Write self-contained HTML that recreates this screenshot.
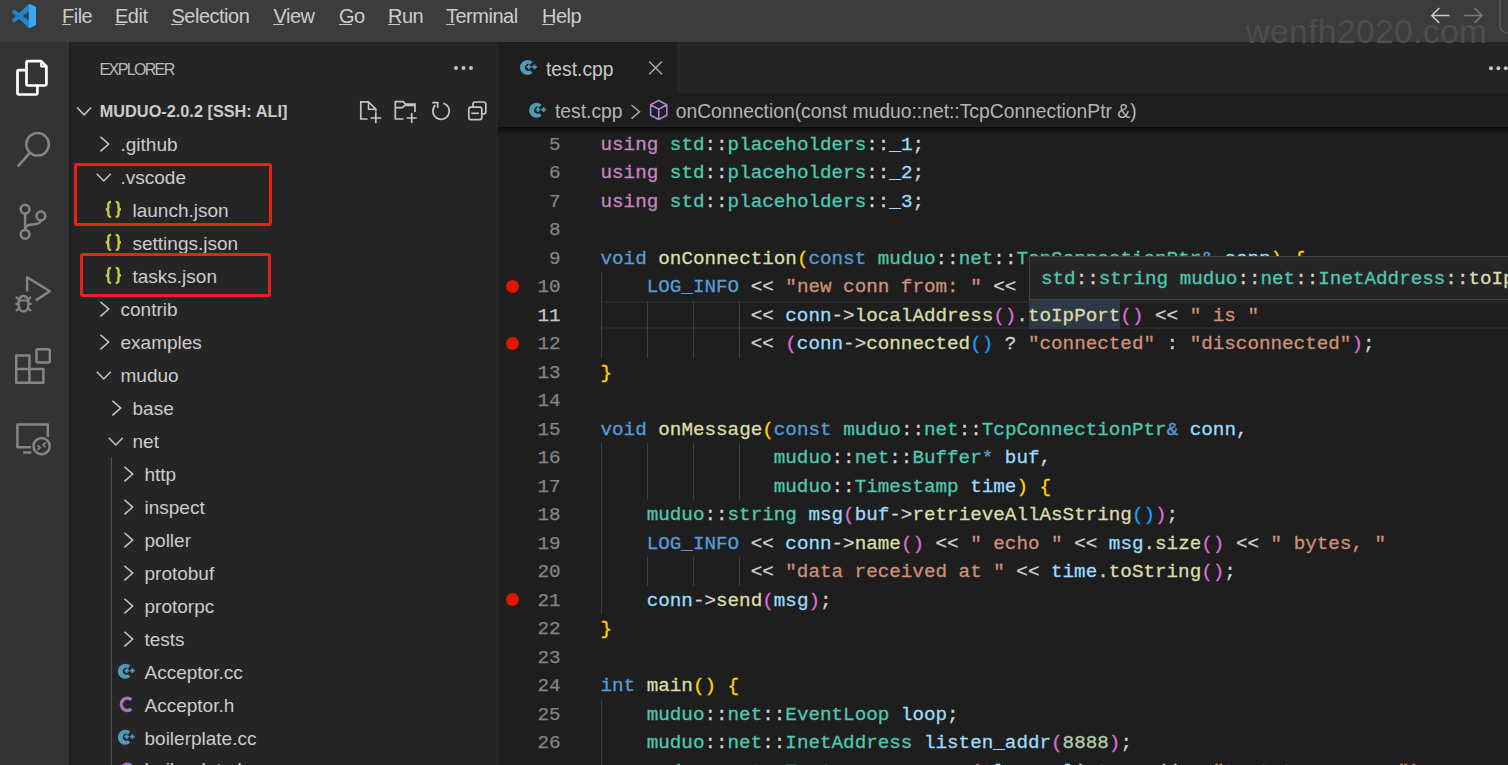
<!DOCTYPE html><html><head><meta charset="utf-8"><style>
*{margin:0;padding:0;box-sizing:border-box}
html,body{width:1508px;height:765px;overflow:hidden;background:#1e1e1e}
body{position:relative;font-family:"Liberation Sans",sans-serif}
.a{position:absolute}
.t{position:absolute;white-space:pre;line-height:1}
#title{left:0;top:0;width:1508px;height:42px;background:#3c3c3c}
#act{left:0;top:42px;width:69px;height:723px;background:#333333}
#side{left:69px;top:42px;width:429px;height:723px;background:#252526}
#tabs{left:498px;top:42px;width:1010px;height:51px;background:#252526}
#tab{left:498px;top:42px;width:179px;height:51px;background:#1e1e1e}
#crumbs{left:498px;top:93px;width:1010px;height:34px;background:#1e1e1e}
.menu{font-size:19.5px;color:#cccccc}
.menu u{text-decoration:none;border-bottom:1px solid #cccccc}
.tree{font-size:19px;color:#cccccc}
.code{font-family:"Liberation Mono",monospace;font-size:19.25px;-webkit-text-stroke:0.3px currentColor;white-space:pre;position:absolute;line-height:28.5px;height:28.5px}
.ln{font-family:"Liberation Mono",monospace;font-size:19.25px;-webkit-text-stroke:0.25px currentColor;position:absolute;line-height:28.5px;color:#858585;text-align:right;width:60px;left:500.5px}
.code span{-webkit-text-stroke:0.3px currentColor}
.k{color:#c586c0}.ty{color:#4ec9b0}.p{color:#d4d4d4}.v{color:#9cdcfe}.b{color:#569cd6}.f{color:#dcdcaa}.s{color:#ce9178}.n{color:#b5cea8}
.y{color:#ffd700}.o{color:#da70d6}.c{color:#179fff}
.guide{position:absolute;width:1px;background:#404040}
.bp{position:absolute;width:13px;height:13px;border-radius:50%;background:#e51400}
</style></head><body><div class="a" id="title"></div><div class="a" id="act"></div><div class="a" id="side"></div>
<div class="a" style="left:69px;top:42px;width:1.5px;height:723px;background:#202021"></div>
<div class="a" id="tabs"></div><div class="a" id="tab"></div><div class="a" id="crumbs"></div>
<svg class="a" style="left:12px;top:4px" width="24" height="24" viewBox="0 0 24 24"><defs><clipPath id="lc"><rect x="16.6" y="0" width="8" height="24"/></clipPath></defs><path fill="#1f86d6" d="M23.15 2.587L18.21.21a1.494 1.494 0 0 0-1.705.29l-9.46 8.63-4.12-3.128a.999.999 0 0 0-1.276.057L.327 7.261A1 1 0 0 0 .326 8.74L3.899 12 .326 15.26a1 1 0 0 0 .001 1.479L1.65 17.94a.999.999 0 0 0 1.276.057l4.12-3.128 9.46 8.63a1.492 1.492 0 0 0 1.704.29l4.942-2.377A1.5 1.5 0 0 0 24 20.06V3.939a1.5 1.5 0 0 0-.85-1.352zm-5.146 14.861L10.826 12l7.178-5.448v10.896z"/><path clip-path="url(#lc)" fill="#3aa7f3" d="M23.15 2.587L18.21.21a1.494 1.494 0 0 0-1.705.29L16.6 24L18.21 23.79l4.942-2.377A1.5 1.5 0 0 0 24 20.06V3.939a1.5 1.5 0 0 0-.85-1.352z"/></svg>
<div class="t" style="left:62.00px;top:6.47px;font-size:20px;color:#cccccc;letter-spacing:-0.5px">File</div>
<div class="a" style="left:61.5px;top:24px;width:9.7px;height:1.2px;background:#c8c8c8"></div>
<div class="t" style="left:115.00px;top:6.47px;font-size:20px;color:#cccccc;letter-spacing:-0.5px">Edit</div>
<div class="a" style="left:114.5px;top:24px;width:10.8px;height:1.2px;background:#c8c8c8"></div>
<div class="t" style="left:171.50px;top:6.47px;font-size:20px;color:#cccccc;letter-spacing:-0.5px">Selection</div>
<div class="a" style="left:171.0px;top:24px;width:10.8px;height:1.2px;background:#c8c8c8"></div>
<div class="t" style="left:273.50px;top:6.47px;font-size:20px;color:#cccccc;letter-spacing:-0.5px">View</div>
<div class="a" style="left:273.0px;top:24px;width:10.8px;height:1.2px;background:#c8c8c8"></div>
<div class="t" style="left:339.00px;top:6.47px;font-size:20px;color:#cccccc;letter-spacing:-0.5px">Go</div>
<div class="a" style="left:338.5px;top:24px;width:13.1px;height:1.2px;background:#c8c8c8"></div>
<div class="t" style="left:388.00px;top:6.47px;font-size:20px;color:#cccccc;letter-spacing:-0.5px">Run</div>
<div class="a" style="left:387.5px;top:24px;width:12.0px;height:1.2px;background:#c8c8c8"></div>
<div class="t" style="left:446.00px;top:6.47px;font-size:20px;color:#cccccc;letter-spacing:-0.5px">Terminal</div>
<div class="a" style="left:445.5px;top:24px;width:9.7px;height:1.2px;background:#c8c8c8"></div>
<div class="t" style="left:542.00px;top:6.47px;font-size:20px;color:#cccccc;letter-spacing:-0.5px">Help</div>
<div class="a" style="left:541.5px;top:24px;width:12.0px;height:1.2px;background:#c8c8c8"></div>
<div class="t" style="left:1245.50px;top:15.24px;font-size:33.5px;color:#4d4d4d;letter-spacing:0.4px">wenfh2020.com</div>
<svg class="a" style="left:1420px;top:0" width="88" height="42"><g fill="none" stroke-width="1.6">
<path stroke="#cccccc" d="M11.8 15.5H29.4M19.3 8L11.8 15.5L19.3 23"/>
<path stroke="#7a7a7a" d="M44 15.5H62M54.5 8L62 15.5L54.5 23"/></g>
<rect x="80" y="-8" width="40" height="41" rx="7" fill="none" stroke="#5e5e5e" stroke-width="1.2"/></svg>
<svg class="a" style="left:0;top:0" width="69" height="470"><g fill="none" stroke-linejoin="round">
<g stroke="#ffffff" stroke-width="2.7">
<path d="M26.5 70.2H18.9a1.4 1.4 0 0 0-1.4 1.4V93.1a1.4 1.4 0 0 0 1.4 1.4H36a1.4 1.4 0 0 0 1.4-1.4V85.5"/>
<path d="M27.9 61.2H41.2L46.4 66.4V84.1a1.4 1.4 0 0 1-1.4 1.4H27.9a1.4 1.4 0 0 1-1.4-1.4V62.6a1.4 1.4 0 0 1 1.4-1.4Z"/>
<path d="M41.2 61.2V66.4H46.4" stroke-width="2"/>
</g>
<g stroke="#858585" stroke-width="2.5">
<circle cx="37.6" cy="144.3" r="11.3"/><path d="M29.6 153.2L17.8 166.5"/>
<circle cx="25.1" cy="209.2" r="4.4"/><circle cx="40.9" cy="215.9" r="4.4"/><circle cx="25.1" cy="234.3" r="4.4"/>
<path d="M25.1 213.6V229.9M25.1 229C26 225 29 224.6 33 224.4C37.5 224.2 40.9 223 40.9 220.3"/>
<path d="M27.1 291.5V277.2L49.8 291.2L35.8 300.4"/>
<path d="M18.6 303.5C18.6 298 20.7 296 23.5 296C26.3 296 28.4 298 28.4 303.5C28.4 309 26.3 311.5 23.5 311.5C20.7 311.5 18.6 309 18.6 303.5Z" stroke-width="2.3"/>
<path d="M18.8 300.5H28.2M16 297L19 299.5M31 297L28 299.5M15.5 303.8H18.6M28.4 303.8H31.5M16 311L19 308M31 311L28 308" stroke-width="2.2"/>
<path d="M16.2 355.5H29.4V369.1H43.4V382.7H16.2ZM16.2 369.1H29.4V382.7"/>
<rect x="36.5" y="349.3" width="13.3" height="13.1" rx="1.5"/>
<path d="M32 447.2H17.4V424.5H47.8V437"/><path d="M23.1 452.5H31.4"/>
</g>
<circle cx="41.6" cy="446.2" r="10.6" fill="#333333"/>
<circle cx="41.6" cy="446.2" r="8.1" stroke="#858585" stroke-width="2.5"/>
<path d="M37.6 445.3L40.2 447.6L37.6 449.9M45.6 442.6L43 444.9L45.6 447.2" stroke="#858585" stroke-width="1.8"/>
</g></svg>
<div class="t" style="left:99.60px;top:62.36px;font-size:16px;color:#bbbbbb;letter-spacing:-1.65px">EXPLORER</div>
<svg class="a" style="left:440px;top:55px" width="40" height="25"><g fill="#c5c5c5"><circle cx="16" cy="13" r="2"/><circle cx="23.5" cy="13" r="2"/><circle cx="31" cy="13" r="2"/></g></svg>
<svg class="a" style="left:0;top:0" width="120" height="130"><path d="M77.1 107.6L84.1 114.8L91.1 107.6" stroke="#c5c5c5" stroke-width="1.5" fill="none"/></svg>
<div class="t" style="left:99.80px;top:103.00px;font-size:16.3px;color:#cccccc;font-weight:bold">MUDUO-2.0.2 [SSH: ALI]</div>
<svg class="a" style="left:350px;top:95px" width="148" height="32"><g fill="none" stroke="#c5c5c5" stroke-width="1.7">
<path d="M17.5 24H10.8V6.9H18.5L25.8 14.2V16.5"/><path d="M18.5 6.9V14.2H25.8" stroke-width="1.5"/><path d="M20.4 23H31.2M25.8 17.2V28.2"/>
<path d="M53.5 24H45.3V6.6H53.2L55.5 9.2H65V17"/><path d="M45.3 12.6H52.5L54.7 10.4H65" stroke-width="1.6"/><path d="M56.7 23H66.7M61.7 18V28"/>
<path d="M93.3 8.2A8.2 8.2 0 1 1 85.4 10.2"/><path d="M82.3 7.6H87.7V12.8"/>
<rect x="118.8" y="12.2" width="13" height="12.4" rx="2.2"/><path d="M123 12.2V9.2A2.2 2.2 0 0 1 125.2 7H133.6A2.2 2.2 0 0 1 135.8 9.2V16.8A2.2 2.2 0 0 1 133.6 19H131.8"/><path d="M121.3 18.3H128.9"/>
</g></svg>
<div class="t" style="left:120.50px;top:134.62px;font-size:19px;color:#cccccc;">.github</div>
<div class="t" style="left:120.50px;top:167.62px;font-size:19px;color:#cccccc;">.vscode</div>
<div class="t" style="left:132.50px;top:200.62px;font-size:19px;color:#cccccc;">launch.json</div>
<div class="t" style="left:132.50px;top:233.62px;font-size:19px;color:#cccccc;">settings.json</div>
<div class="t" style="left:132.50px;top:266.62px;font-size:19px;color:#cccccc;">tasks.json</div>
<div class="t" style="left:120.50px;top:299.62px;font-size:19px;color:#cccccc;">contrib</div>
<div class="t" style="left:120.50px;top:332.62px;font-size:19px;color:#cccccc;">examples</div>
<div class="t" style="left:120.50px;top:365.62px;font-size:19px;color:#cccccc;">muduo</div>
<div class="t" style="left:132.50px;top:398.62px;font-size:19px;color:#cccccc;">base</div>
<div class="t" style="left:132.50px;top:431.62px;font-size:19px;color:#cccccc;">net</div>
<div class="t" style="left:144.50px;top:464.62px;font-size:19px;color:#cccccc;">http</div>
<div class="t" style="left:144.50px;top:497.62px;font-size:19px;color:#cccccc;">inspect</div>
<div class="t" style="left:144.50px;top:530.62px;font-size:19px;color:#cccccc;">poller</div>
<div class="t" style="left:144.50px;top:563.62px;font-size:19px;color:#cccccc;">protobuf</div>
<div class="t" style="left:144.50px;top:596.62px;font-size:19px;color:#cccccc;">protorpc</div>
<div class="t" style="left:144.50px;top:629.62px;font-size:19px;color:#cccccc;">tests</div>
<div class="t" style="left:144.50px;top:662.62px;font-size:19px;color:#cccccc;">Acceptor.cc</div>
<div class="t" style="left:144.50px;top:695.62px;font-size:19px;color:#cccccc;">Acceptor.h</div>
<div class="t" style="left:144.50px;top:728.62px;font-size:19px;color:#cccccc;">boilerplate.cc</div>
<div class="t" style="left:144.50px;top:760.12px;font-size:19px;color:#cccccc;">boilerplate.h</div>
<svg class="a" style="left:0;top:0" width="498" height="765"><path d="M100.4 136.8L108.7 144.1L100.4 151.4" stroke="#c5c5c5" stroke-width="1.5" fill="none"/><path d="M96.8 173.7L103.8 180.9L110.8 173.7" stroke="#c5c5c5" stroke-width="1.5" fill="none"/><g transform="translate(105.2,200.9)" stroke="#cbcb41" stroke-width="2.4" fill="none"><path d="M5.9 1C3.1 1 3.1 2.3 3.1 4.2V6.4C3.1 7.6 2.2 8.5 0.6 8.5C2.2 8.5 3.1 9.4 3.1 10.6V12.8C3.1 14.7 3.1 16 5.9 16"/><path d="M10.5 1C13.3 1 13.3 2.3 13.3 4.2V6.4C13.3 7.6 14.2 8.5 15.8 8.5C14.2 8.5 13.3 9.4 13.3 10.6V12.8C13.3 14.7 13.3 16 10.5 16"/></g><g transform="translate(105.2,233.9)" stroke="#cbcb41" stroke-width="2.4" fill="none"><path d="M5.9 1C3.1 1 3.1 2.3 3.1 4.2V6.4C3.1 7.6 2.2 8.5 0.6 8.5C2.2 8.5 3.1 9.4 3.1 10.6V12.8C3.1 14.7 3.1 16 5.9 16"/><path d="M10.5 1C13.3 1 13.3 2.3 13.3 4.2V6.4C13.3 7.6 14.2 8.5 15.8 8.5C14.2 8.5 13.3 9.4 13.3 10.6V12.8C13.3 14.7 13.3 16 10.5 16"/></g><g transform="translate(105.2,266.9)" stroke="#cbcb41" stroke-width="2.4" fill="none"><path d="M5.9 1C3.1 1 3.1 2.3 3.1 4.2V6.4C3.1 7.6 2.2 8.5 0.6 8.5C2.2 8.5 3.1 9.4 3.1 10.6V12.8C3.1 14.7 3.1 16 5.9 16"/><path d="M10.5 1C13.3 1 13.3 2.3 13.3 4.2V6.4C13.3 7.6 14.2 8.5 15.8 8.5C14.2 8.5 13.3 9.4 13.3 10.6V12.8C13.3 14.7 13.3 16 10.5 16"/></g><path d="M100.4 301.8L108.7 309.1L100.4 316.4" stroke="#c5c5c5" stroke-width="1.5" fill="none"/><path d="M100.4 334.8L108.7 342.1L100.4 349.4" stroke="#c5c5c5" stroke-width="1.5" fill="none"/><path d="M96.8 371.7L103.8 378.9L110.8 371.7" stroke="#c5c5c5" stroke-width="1.5" fill="none"/><path d="M112.4 400.8L120.7 408.1L112.4 415.4" stroke="#c5c5c5" stroke-width="1.5" fill="none"/><path d="M108.8 437.7L115.8 444.9L122.8 437.7" stroke="#c5c5c5" stroke-width="1.5" fill="none"/><path d="M124.4 466.8L132.7 474.1L124.4 481.4" stroke="#c5c5c5" stroke-width="1.5" fill="none"/><path d="M124.4 499.8L132.7 507.1L124.4 514.4" stroke="#c5c5c5" stroke-width="1.5" fill="none"/><path d="M124.4 532.8L132.7 540.1L124.4 547.4" stroke="#c5c5c5" stroke-width="1.5" fill="none"/><path d="M124.4 565.8L132.7 573.1L124.4 580.4" stroke="#c5c5c5" stroke-width="1.5" fill="none"/><path d="M124.4 598.8L132.7 606.1L124.4 613.4" stroke="#c5c5c5" stroke-width="1.5" fill="none"/><path d="M124.4 631.8L132.7 639.1L124.4 646.4" stroke="#c5c5c5" stroke-width="1.5" fill="none"/><g transform="translate(118.0,671.2)"><path d="M12.3 -5.6A7.5 7.5 0 1 0 12.3 5.6L10.1 3.0A3.5 3.5 0 1 1 10.1 -3.0Z" fill="#519aba"/><path d="M6.3 -0.6H11.1M8.7 -3V1.8M11.9 -0.6H16.7M14.3 -3V1.8" stroke="#519aba" stroke-width="1.8" fill="none"/></g><path d="M131.2 699.7A5.9 6.2 0 1 0 131.2 708.9" stroke="#a074c4" stroke-width="3.4" fill="none"/><g transform="translate(118.0,737.2)"><path d="M12.3 -5.6A7.5 7.5 0 1 0 12.3 5.6L10.1 3.0A3.5 3.5 0 1 1 10.1 -3.0Z" fill="#519aba"/><path d="M6.3 -0.6H11.1M8.7 -3V1.8M11.9 -0.6H16.7M14.3 -3V1.8" stroke="#519aba" stroke-width="1.8" fill="none"/></g><path d="M131.2 765.7A5.9 6.2 0 1 0 131.2 774.9" stroke="#a074c4" stroke-width="3.4" fill="none"/><path d="M111.4 457V765" stroke="#585858" stroke-width="1"/></svg>
<div class="a" style="left:74.2px;top:163px;width:198px;height:63px;border:3.5px solid #e8221b;border-radius:3px"></div>
<div class="a" style="left:80px;top:253.2px;width:190.8px;height:44.3px;border:3.5px solid #e8221b;border-radius:3px"></div>
<div class="t" style="left:546.00px;top:60.26px;font-size:19.3px;color:#c8c8c8;">test.cpp</div>
<div class="t" style="left:555.00px;top:102.06px;font-size:19.3px;color:#b4b4b4;">test.cpp</div>
<div class="t" style="left:675.70px;top:102.06px;font-size:19.3px;color:#b4b4b4;">onConnection(const muduo::net::TcpConnectionPtr &amp;)</div>
<svg class="a" style="left:0;top:0" width="1508" height="130"><g fill="none"><g transform="translate(520.2,67.4) scale(1.0)"><path d="M12.3 -5.6A7.5 7.5 0 1 0 12.3 5.6L10.1 3.0A3.5 3.5 0 1 1 10.1 -3.0Z" fill="#519aba"/><path d="M6.3 -0.6H11.1M8.7 -3V1.8M11.9 -0.6H16.7M14.3 -3V1.8" stroke="#519aba" stroke-width="1.8" fill="none"/></g><g transform="translate(529.3,110.2) scale(1.0)"><path d="M12.3 -5.6A7.5 7.5 0 1 0 12.3 5.6L10.1 3.0A3.5 3.5 0 1 1 10.1 -3.0Z" fill="#519aba"/><path d="M6.3 -0.6H11.1M8.7 -3V1.8M11.9 -0.6H16.7M14.3 -3V1.8" stroke="#519aba" stroke-width="1.8" fill="none"/></g><path d="M649.2 61.5L662 74.3M662 61.5L649.2 74.3" stroke="#a6a6a6" stroke-width="1.6"/><path d="M631.5 105L639.5 111.8L631.5 118.6" stroke="#a9a9a9" stroke-width="1.5"/><path d="M658.7 100.5L666.8 104.8V115.2L658.7 119.5L650.6 115.2V104.8Z M650.6 104.8L658.7 109.2L666.8 104.8 M658.7 109.2V119.5" stroke="#b180d7" stroke-width="1.6" stroke-linejoin="round"/><g fill="#c5c5c5"><circle cx="1491" cy="68.2" r="2"/><circle cx="1498.4" cy="68.2" r="2"/><circle cx="1505.8" cy="68.2" r="2"/></g></g></svg>
<div class="a" style="left:498px;top:127px;width:1010px;height:7px;background:linear-gradient(#0c0c0c,rgba(30,30,30,0))"></div>
<div class="a" style="left:600.5px;top:300.5px;width:907.5px;height:28.5px;border-top:2px solid #282828;border-bottom:2px solid #282828"></div>
<div class="a" style="left:1028.6px;top:300px;width:91.6px;height:28.8px;background:#2e3946"></div>
<div class="ln" style="top:130.80px;color:#858585">5</div>
<div class="code" style="left:600.50px;top:130.80px"><span class="k">using</span><span class="p"> </span><span class="ty">std</span><span class="p">::</span><span class="ty">placeholders</span><span class="p">::</span><span class="v">_1</span><span class="p">;</span></div>
<div class="ln" style="top:159.30px;color:#858585">6</div>
<div class="code" style="left:600.50px;top:159.30px"><span class="k">using</span><span class="p"> </span><span class="ty">std</span><span class="p">::</span><span class="ty">placeholders</span><span class="p">::</span><span class="v">_2</span><span class="p">;</span></div>
<div class="ln" style="top:187.80px;color:#858585">7</div>
<div class="code" style="left:600.50px;top:187.80px"><span class="k">using</span><span class="p"> </span><span class="ty">std</span><span class="p">::</span><span class="ty">placeholders</span><span class="p">::</span><span class="v">_3</span><span class="p">;</span></div>
<div class="ln" style="top:216.30px;color:#858585">8</div>
<div class="ln" style="top:244.80px;color:#858585">9</div>
<div class="code" style="left:600.50px;top:244.80px"><span class="b">void</span><span class="p"> </span><span class="f">onConnection</span><span class="y">(</span><span class="b">const</span><span class="p"> </span><span class="ty">muduo</span><span class="p">::</span><span class="ty">net</span><span class="p">::</span><span class="ty">TcpConnectionPtr</span><span class="b">&amp;</span><span class="p"> </span><span class="v">conn</span><span class="y">)</span><span class="p"> </span><span class="y">{</span></div>
<div class="guide" style="left:600.5px;top:272.0px;height:28.5px"></div>
<div class="ln" style="top:273.30px;color:#858585">10</div>
<div class="bp" style="left:506px;top:279.8px"></div>
<div class="code" style="left:646.70px;top:273.30px"><span class="b">LOG_INFO</span><span class="p"> &lt;&lt; </span><span class="s">&quot;new conn from: &quot;</span><span class="p"> &lt;&lt;</span></div>
<div class="guide" style="left:600.5px;top:300.5px;height:28.5px"></div>
<div class="guide" style="left:646.7px;top:300.5px;height:28.5px"></div>
<div class="guide" style="left:692.9px;top:300.5px;height:28.5px"></div>
<div class="guide" style="left:739.1px;top:300.5px;height:28.5px"></div>
<div class="ln" style="top:301.80px;color:#c6c6c6">11</div>
<div class="code" style="left:750.65px;top:301.80px"><span class="p">&lt;&lt; </span><span class="v">conn</span><span class="p">-&gt;</span><span class="f">localAddress</span><span class="o">()</span><span class="p">.</span><span class="f">toIpPort</span><span class="o">()</span><span class="p"> &lt;&lt; </span><span class="s">&quot; is &quot;</span></div>
<div class="guide" style="left:600.5px;top:329.0px;height:28.5px"></div>
<div class="guide" style="left:646.7px;top:329.0px;height:28.5px"></div>
<div class="guide" style="left:692.9px;top:329.0px;height:28.5px"></div>
<div class="guide" style="left:739.1px;top:329.0px;height:28.5px"></div>
<div class="ln" style="top:330.30px;color:#858585">12</div>
<div class="bp" style="left:506px;top:336.8px"></div>
<div class="code" style="left:750.65px;top:330.30px"><span class="p">&lt;&lt; </span><span class="o">(</span><span class="v">conn</span><span class="p">-&gt;</span><span class="f">connected</span><span class="c">()</span><span class="p"> ? </span><span class="s">&quot;connected&quot;</span><span class="p"> : </span><span class="s">&quot;disconnected&quot;</span><span class="o">)</span><span class="p">;</span></div>
<div class="ln" style="top:358.80px;color:#858585">13</div>
<div class="code" style="left:600.50px;top:358.80px"><span class="y">}</span></div>
<div class="ln" style="top:387.30px;color:#858585">14</div>
<div class="ln" style="top:415.80px;color:#858585">15</div>
<div class="code" style="left:600.50px;top:415.80px"><span class="b">void</span><span class="p"> </span><span class="f">onMessage</span><span class="y">(</span><span class="b">const</span><span class="p"> </span><span class="ty">muduo</span><span class="p">::</span><span class="ty">net</span><span class="p">::</span><span class="ty">TcpConnectionPtr</span><span class="b">&amp;</span><span class="p"> </span><span class="v">conn</span><span class="p">,</span></div>
<div class="guide" style="left:600.5px;top:443.0px;height:28.5px"></div>
<div class="guide" style="left:646.7px;top:443.0px;height:28.5px"></div>
<div class="guide" style="left:692.9px;top:443.0px;height:28.5px"></div>
<div class="guide" style="left:739.1px;top:443.0px;height:28.5px"></div>
<div class="ln" style="top:444.30px;color:#858585">16</div>
<div class="code" style="left:773.75px;top:444.30px"><span class="ty">muduo</span><span class="p">::</span><span class="ty">net</span><span class="p">::</span><span class="ty">Buffer</span><span class="b">*</span><span class="p"> </span><span class="v">buf</span><span class="p">,</span></div>
<div class="guide" style="left:600.5px;top:471.5px;height:28.5px"></div>
<div class="guide" style="left:646.7px;top:471.5px;height:28.5px"></div>
<div class="guide" style="left:692.9px;top:471.5px;height:28.5px"></div>
<div class="guide" style="left:739.1px;top:471.5px;height:28.5px"></div>
<div class="ln" style="top:472.80px;color:#858585">17</div>
<div class="code" style="left:773.75px;top:472.80px"><span class="ty">muduo</span><span class="p">::</span><span class="ty">Timestamp</span><span class="p"> </span><span class="v">time</span><span class="y">)</span><span class="p"> </span><span class="y">{</span></div>
<div class="guide" style="left:600.5px;top:500.0px;height:28.5px"></div>
<div class="ln" style="top:501.30px;color:#858585">18</div>
<div class="code" style="left:646.70px;top:501.30px"><span class="ty">muduo</span><span class="p">::</span><span class="ty">string</span><span class="p"> </span><span class="v">msg</span><span class="o">(</span><span class="v">buf</span><span class="p">-&gt;</span><span class="f">retrieveAllAsString</span><span class="c">()</span><span class="o">)</span><span class="p">;</span></div>
<div class="guide" style="left:600.5px;top:528.5px;height:28.5px"></div>
<div class="ln" style="top:529.80px;color:#858585">19</div>
<div class="code" style="left:646.70px;top:529.80px"><span class="b">LOG_INFO</span><span class="p"> &lt;&lt; </span><span class="v">conn</span><span class="p">-&gt;</span><span class="f">name</span><span class="o">()</span><span class="p"> &lt;&lt; </span><span class="s">&quot; echo &quot;</span><span class="p"> &lt;&lt; </span><span class="v">msg</span><span class="p">.</span><span class="f">size</span><span class="o">()</span><span class="p"> &lt;&lt; </span><span class="s">&quot; bytes, &quot;</span></div>
<div class="guide" style="left:600.5px;top:557.0px;height:28.5px"></div>
<div class="guide" style="left:646.7px;top:557.0px;height:28.5px"></div>
<div class="guide" style="left:692.9px;top:557.0px;height:28.5px"></div>
<div class="guide" style="left:739.1px;top:557.0px;height:28.5px"></div>
<div class="ln" style="top:558.30px;color:#858585">20</div>
<div class="code" style="left:750.65px;top:558.30px"><span class="p">&lt;&lt; </span><span class="s">&quot;data received at &quot;</span><span class="p"> &lt;&lt; </span><span class="v">time</span><span class="p">.</span><span class="f">toString</span><span class="o">()</span><span class="p">;</span></div>
<div class="guide" style="left:600.5px;top:585.5px;height:28.5px"></div>
<div class="ln" style="top:586.80px;color:#858585">21</div>
<div class="bp" style="left:506px;top:593.2px"></div>
<div class="code" style="left:646.70px;top:586.80px"><span class="v">conn</span><span class="p">-&gt;</span><span class="f">send</span><span class="o">(</span><span class="v">msg</span><span class="o">)</span><span class="p">;</span></div>
<div class="ln" style="top:615.30px;color:#858585">22</div>
<div class="code" style="left:600.50px;top:615.30px"><span class="y">}</span></div>
<div class="ln" style="top:643.80px;color:#858585">23</div>
<div class="ln" style="top:672.30px;color:#858585">24</div>
<div class="code" style="left:600.50px;top:672.30px"><span class="b">int</span><span class="p"> </span><span class="f">main</span><span class="y">()</span><span class="p"> </span><span class="y">{</span></div>
<div class="guide" style="left:600.5px;top:699.5px;height:28.5px"></div>
<div class="ln" style="top:700.80px;color:#858585">25</div>
<div class="code" style="left:646.70px;top:700.80px"><span class="ty">muduo</span><span class="p">::</span><span class="ty">net</span><span class="p">::</span><span class="ty">EventLoop</span><span class="p"> </span><span class="v">loop</span><span class="p">;</span></div>
<div class="guide" style="left:600.5px;top:728.0px;height:28.5px"></div>
<div class="ln" style="top:729.30px;color:#858585">26</div>
<div class="code" style="left:646.70px;top:729.30px"><span class="ty">muduo</span><span class="p">::</span><span class="ty">net</span><span class="p">::</span><span class="ty">InetAddress</span><span class="p"> </span><span class="v">listen_addr</span><span class="o">(</span><span class="n">8888</span><span class="o">)</span><span class="p">;</span></div>
<div class="guide" style="left:600.5px;top:756.5px;height:28.5px"></div>
<div class="ln" style="top:757.80px;color:#858585">27</div>
<div class="code" style="left:646.70px;top:757.80px"><span class="ty">muduo</span><span class="p">::</span><span class="ty">net</span><span class="p">::</span><span class="ty">TcpServer</span><span class="p"> </span><span class="v">server</span><span class="o">(</span><span class="b">&amp;</span><span class="v">loop</span><span class="p">, </span><span class="v">listen_addr</span><span class="p">, </span><span class="s">&quot;test_tcp_server&quot;</span><span class="o">)</span><span class="p">;</span></div>
<div class="a" style="left:1028.6px;top:256.2px;width:500px;height:44px;background:#252526;border:1px solid #454545"></div>
<div class="code" style="left:1041px;top:264.80px"><span class="ty">std</span><span class="p">::</span><span class="ty">string</span><span class="p"> </span><span class="ty">muduo</span><span class="p">::</span><span class="ty">net</span><span class="p">::</span><span class="ty">InetAddress</span><span class="p">::</span><span class="f">toIpPort</span><span class="o">() </span><span class="b">const</span></div></body></html>
